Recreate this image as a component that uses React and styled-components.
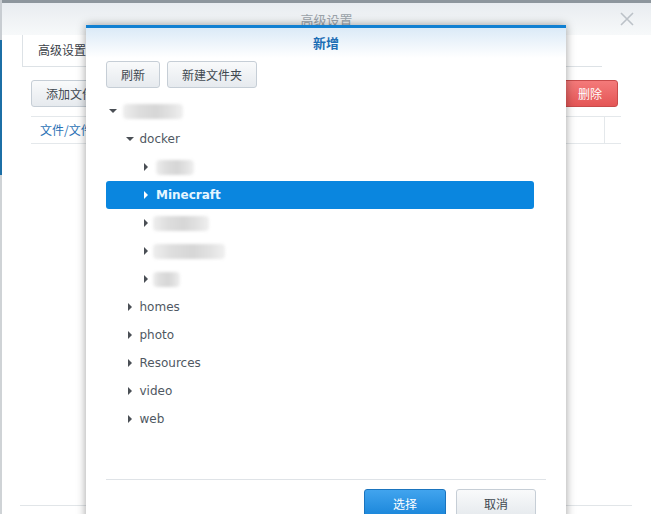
import styled, { createGlobalStyle } from "styled-components";

const GlobalStyle = createGlobalStyle`
  html, body {
    margin: 0;
    padding: 0;
    background: #ffffff;
  }
  body {
    font-family: "DejaVu Sans", "Noto Sans CJK SC", sans-serif;
    font-size: 12px;
    color: #4f5862;
  }
`;

const cjk = `"Noto Sans CJK SC", "DejaVu Sans", sans-serif`;

const Page = styled.div`
  position: relative;
  width: 651px;
  height: 514px;
  overflow: hidden;
  display: flex;
  background: #fff;
`;

const LeftEdge = styled.div`
  width: 2px;
  flex: none;
  background: linear-gradient(
    180deg,
    #c8cdd2 0,
    #c8cdd2 40px,
    #1c6fa6 40px,
    #1c6fa6 175px,
    #cfd3d6 175px
  );
`;

const Window = styled.div`
  flex: 1;
  display: flex;
  flex-direction: column;
`;

const TopStrip = styled.div`
  height: 3px;
  background: #8d969d;
`;

const WinHeader = styled.div`
  height: 32px;
  display: flex;
  align-items: center;
  justify-content: center;
  position: relative;
  background: linear-gradient(180deg, #e8ecf0 0%, #f7f9fa 100%);
  font-family: ${cjk};
  font-size: 13px;
  color: #9ba3aa;
`;

const CloseX = styled.svg`
  position: absolute;
  right: 17px;
  top: 9px;
`;

const TabBar = styled.div`
  margin: 0 49px 0 20px;
  height: 31px;
  display: flex;
  border-bottom: 1px solid #dde2e6;
`;

const Tab = styled.div`
  border-left: 1px solid #dde2e6;
  padding: 0 15px;
  line-height: 30px;
  font-family: ${cjk};
  font-size: 12px;
  color: #3b4148;
`;

const WinToolbar = styled.div`
  margin: 13px 33px 0 29px;
  display: flex;
  justify-content: space-between;
`;

const GreyButton = styled.button`
  height: 27px;
  min-width: 53px;
  padding: 0 14px;
  border: 1px solid #c6ced6;
  border-radius: 3px;
  background: linear-gradient(180deg, #f9fafb 0%, #e6eaee 100%);
  font-family: ${cjk};
  font-size: 12px;
  color: #404850;
`;

const RedButton = styled.button`
  height: 27px;
  width: 56px;
  border: 1px solid #c84b4b;
  border-radius: 3px;
  background: linear-gradient(180deg, #f47a7a 0%, #e45656 100%);
  font-family: ${cjk};
  font-size: 12px;
  color: #fff;
`;

const TableHead = styled.div`
  margin: 9px 30px 0 29px;
  height: 26px;
  display: flex;
  border-top: 1px solid #e4e8eb;
  border-bottom: 1px solid #e4e8eb;
`;

const HeadCell = styled.div`
  box-sizing: border-box;
  flex: ${(p) => (p.$grow ? 1 : "none")};
  width: ${(p) => p.$w || 0}px;
  padding-left: 9px;
  line-height: 26px;
  font-family: ${cjk};
  font-size: 12px;
  color: #2b72b6;
  border-left: ${(p) => (p.$divider ? "1px solid #e4e8eb" : "none")};
`;

const WinSpacer = styled.div`
  flex: 1;
`;

const WinFoot = styled.div`
  margin: 0 19px 8px 18px;
  border-top: 1px solid #e1e5e8;
`;

const Dialog = styled.div`
  position: absolute;
  left: 86px;
  top: 25px;
  width: 480px;
  height: 508px;
  display: flex;
  flex-direction: column;
  background: #fff;
  border-top: 3px solid #1180d2;
  box-shadow: 0 0 9px rgba(0, 0, 0, 0.38);
`;

const DialogHeader = styled.div`
  height: 30px;
  line-height: 30px;
  text-align: center;
  background: linear-gradient(180deg, #dbeaf7 0%, #ffffff 100%);
  font-family: ${cjk};
  font-size: 13px;
  font-weight: bold;
  color: #1c6db5;
`;

const DialogBody = styled.div`
  flex: 1;
  padding: 3px 20px 0;
  display: flex;
  flex-direction: column;
`;

const DialogToolbar = styled.div`
  display: flex;
  gap: 7px;
`;

const Tree = styled.div`
  margin: 9px 12px 0 0;
  flex: 1;
`;

const Row = styled.div`
  height: 28px;
  display: flex;
  align-items: center;
  padding-left: ${(p) => p.$depth * 16.5}px;
  border-radius: 3px;
  background: ${(p) => (p.$selected ? "#0a86df" : "transparent")};
  color: ${(p) => (p.$selected ? "#e6f6ff" : "#4f5862")};
  font-weight: ${(p) => (p.$selected ? "bold" : "normal")};
`;

const Toggle = styled.span`
  width: 14px;
  height: 28px;
  flex: none;
  display: flex;
  align-items: center;
  justify-content: center;
  margin-right: 3px;
`;

const ArrowDown = styled.span`
  width: 0;
  height: 0;
  border-left: 4px solid transparent;
  border-right: 4px solid transparent;
  border-top: 4px solid #4a4f55;
`;

const ArrowRight = styled.span`
  width: 0;
  height: 0;
  border-top: 4px solid transparent;
  border-bottom: 4px solid transparent;
  border-left: 4px solid ${(p) => (p.$light ? "#ffffff" : "#4a4f55")};
`;

const Blur = styled.span`
  display: inline-block;
  width: ${(p) => p.$w}px;
  height: 15px;
  margin-left: ${(p) => p.$shift || 0}px;
  border-radius: 4px;
  background: linear-gradient(
    90deg,
    #eeeeee 0%,
    #dedede 25%,
    #d6d6d6 55%,
    #e2e2e2 80%,
    #f0f0f0 100%
  );
  filter: blur(1.5px);
`;

const DialogFooter = styled.div`
  margin: 0 20px;
  padding: 9px 10px 0 0;
  height: 47px;
  border-top: 1px solid #dfe3e7;
  display: flex;
  justify-content: flex-end;
  gap: 10px;
`;

const BlueButton = styled.button`
  height: 28px;
  width: 82px;
  border: 1px solid #1a74be;
  border-radius: 3px;
  background: linear-gradient(180deg, #41a4ee 0%, #1a86da 100%);
  font-family: ${cjk};
  font-size: 12px;
  color: #fff;
`;

const CancelButton = styled(GreyButton)`
  height: 28px;
  width: 80px;
`;

const tree = [
  { depth: 0, open: true, blur: 60 },
  { depth: 1, open: true, label: "docker" },
  { depth: 2, blur: 38 },
  { depth: 2, label: "Minecraft", selected: true },
  { depth: 2, blur: 56, shift: -3 },
  { depth: 2, blur: 72, shift: -3 },
  { depth: 2, blur: 27, shift: -3 },
  { depth: 1, label: "homes" },
  { depth: 1, label: "photo" },
  { depth: 1, label: "Resources" },
  { depth: 1, label: "video" },
  { depth: 1, label: "web" },
];

export default function App() {
  return (
    <Page>
      <GlobalStyle />
      <LeftEdge />
      <Window>
        <TopStrip />
        <WinHeader>
          高级设置
          <CloseX width="14" height="14" viewBox="0 0 14 14">
            <path d="M1 1L13 13M13 1L1 13" stroke="#bcc2c8" strokeWidth="1.6" />
          </CloseX>
        </WinHeader>
        <TabBar>
          <Tab>高级设置</Tab>
        </TabBar>
        <WinToolbar>
          <GreyButton>添加文件夹</GreyButton>
          <RedButton>删除</RedButton>
        </WinToolbar>
        <TableHead>
          <HeadCell $grow>文件/文件夹</HeadCell>
          <HeadCell $w={17} $divider />
        </TableHead>
        <WinSpacer />
        <WinFoot />
      </Window>

      <Dialog>
        <DialogHeader>新增</DialogHeader>
        <DialogBody>
          <DialogToolbar>
            <GreyButton>刷新</GreyButton>
            <GreyButton>新建文件夹</GreyButton>
          </DialogToolbar>
          <Tree>
            {tree.map((n, i) => (
              <Row key={i} $depth={n.depth} $selected={n.selected}>
                <Toggle>
                  {n.open ? <ArrowDown /> : <ArrowRight $light={n.selected} />}
                </Toggle>
                {n.blur ? <Blur $w={n.blur} $shift={n.shift} /> : n.label}
              </Row>
            ))}
          </Tree>
        </DialogBody>
        <DialogFooter>
          <BlueButton>选择</BlueButton>
          <CancelButton>取消</CancelButton>
        </DialogFooter>
      </Dialog>
    </Page>
  );
}
